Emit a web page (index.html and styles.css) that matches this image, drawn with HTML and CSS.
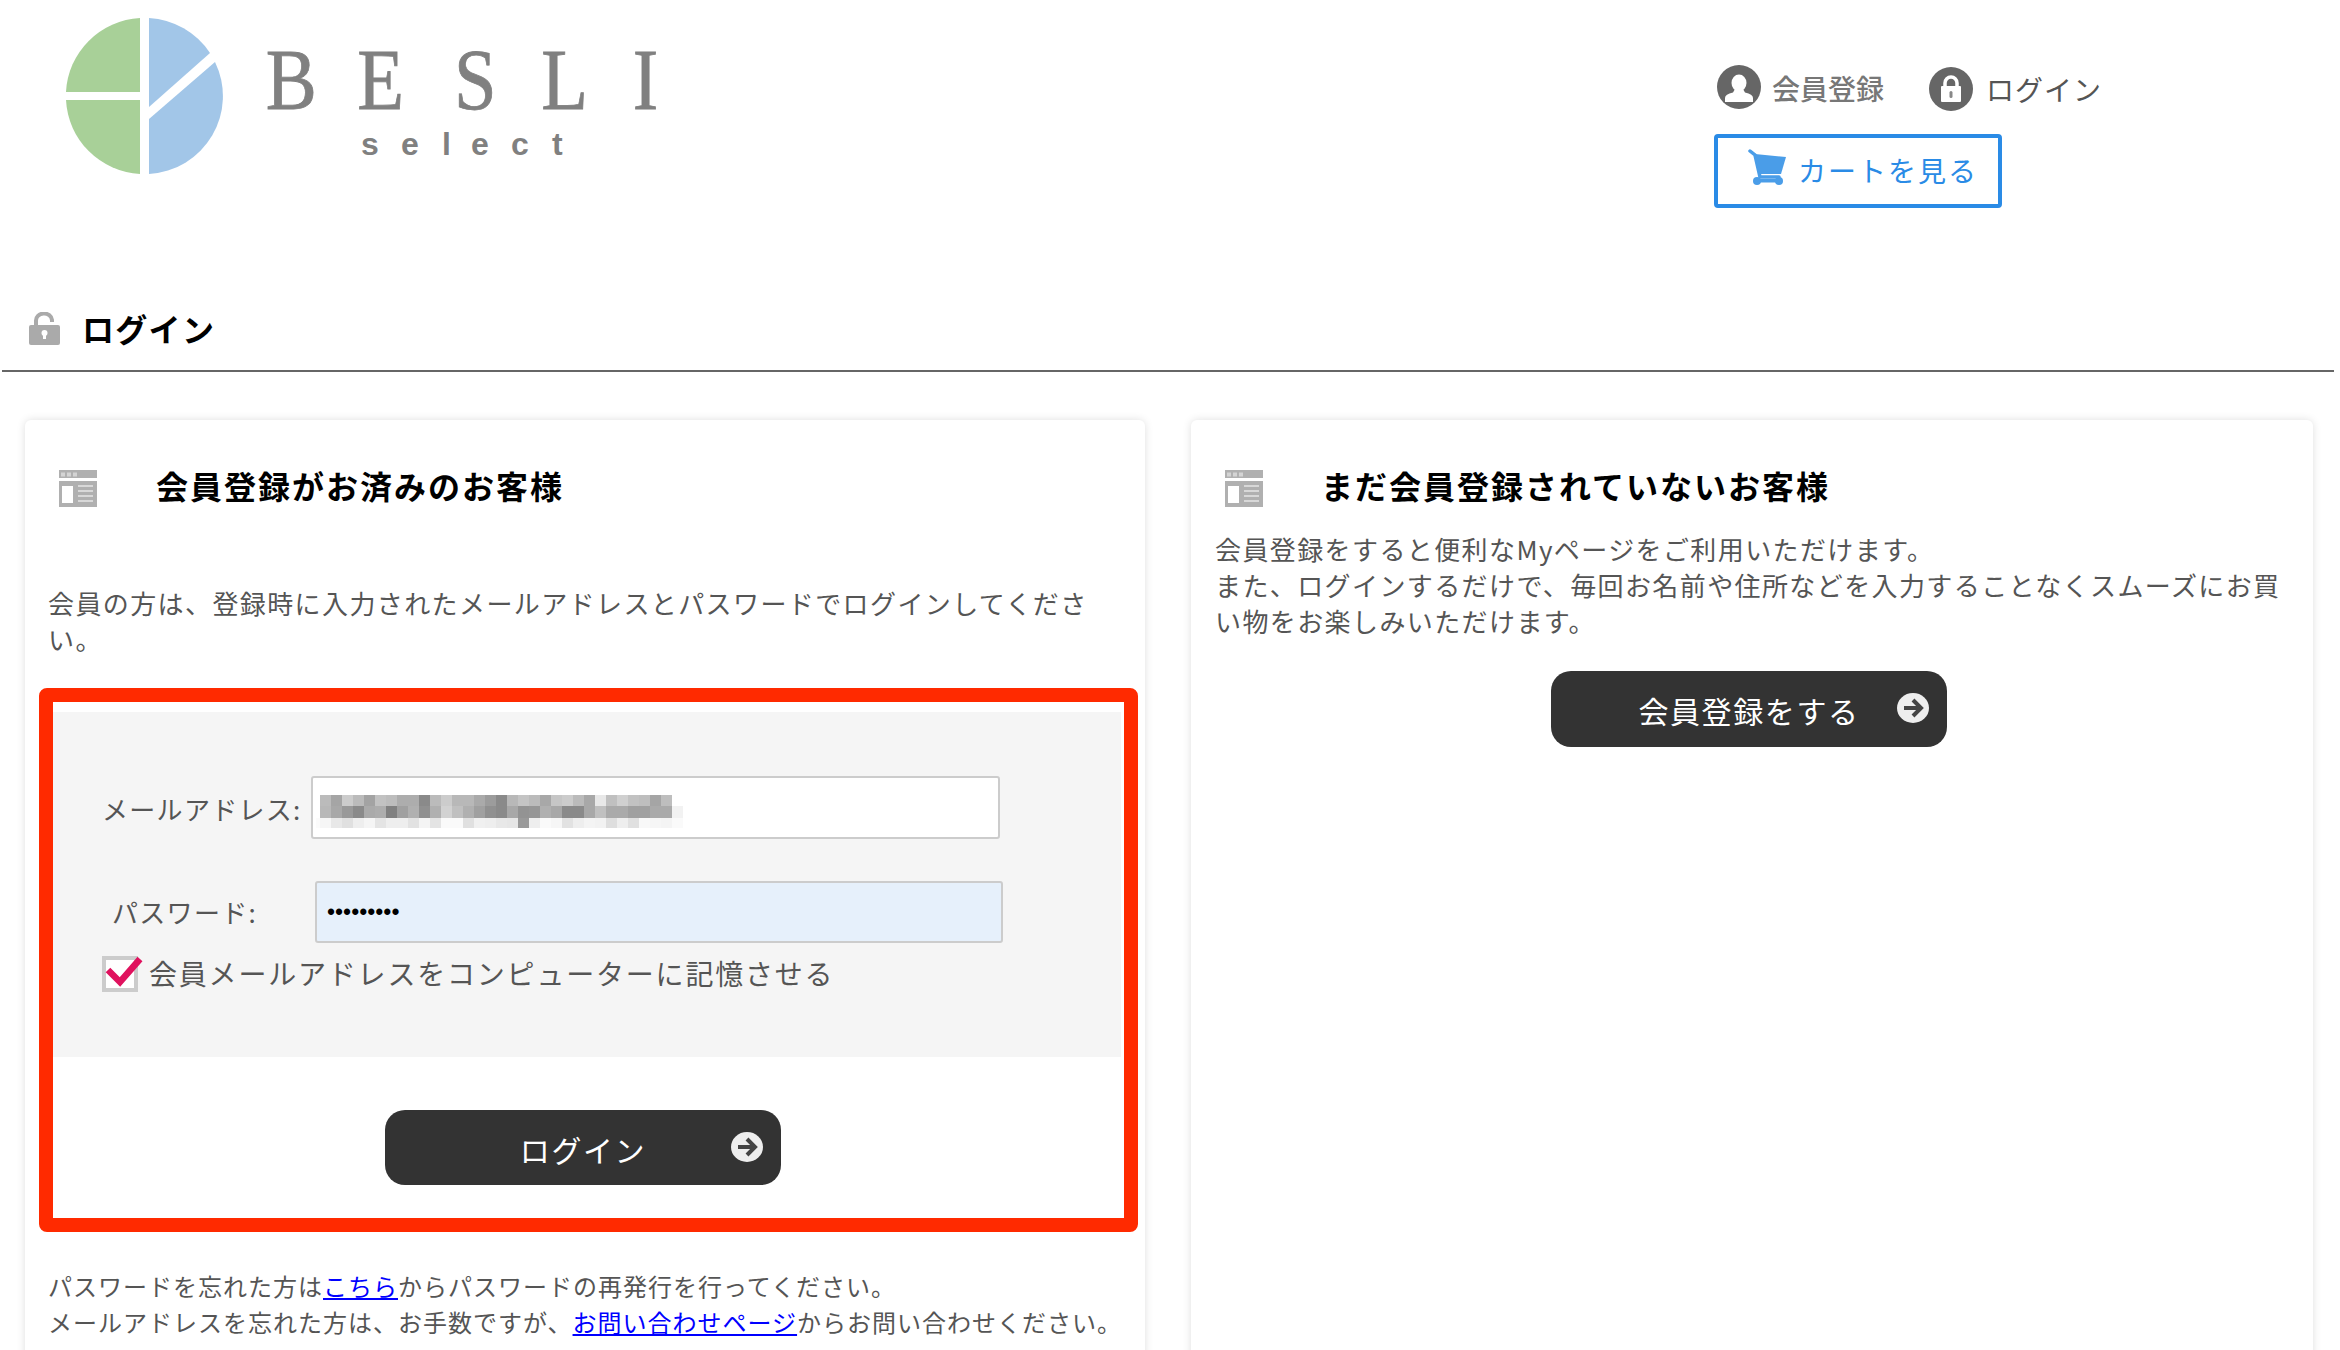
FILE: index.html
```html
<!DOCTYPE html>
<html lang="ja">
<head>
<meta charset="utf-8">
<title>ログイン</title>
<link rel="stylesheet" href="styles.css">
</head>
<body>
<header class="site-header">
  <a class="logo" href="#">
    <svg class="logo-svg" width="680" height="180" viewBox="0 0 680 180">
      <path fill="#a8d098" d="M140 18A78.5 78 0 0 0 66 92H140Z"/>
      <path fill="#a8d098" d="M66 100A78.5 78 0 0 0 140 174V100Z"/>
      <path fill="#a2c6e8" d="M149 18A78.5 78 0 0 1 210 53L149 107Z"/>
      <path fill="#a2c6e8" d="M149 119L215 62A78.5 78 0 0 1 149 174Z"/>
      <text class="logo-name" transform="scale(.88 1)" x="302 406 516 615 719" y="109">BESLI</text>
      <text class="logo-sub" x="361 401 442 471 511 552" y="155">select</text>
    </svg>
  </a>
  <nav class="head-nav">
    <div class="head-links">
      <a class="head-link head-link-reg" href="#">
        <svg class="round-icon" width="44" height="44" viewBox="0 0 44 44">
          <circle cx="22" cy="22" r="22" fill="#666"/>
          <ellipse cx="22" cy="18" rx="7.5" ry="8.5" fill="#fff"/>
          <path fill="#fff" d="M8 37V33Q8 29 16 27.5L18 24H26L28 27.5Q36 29 36 33V37Z"/>
        </svg>
        <span>会員登録</span>
      </a>
      <a class="head-link head-link-login" href="#">
        <svg class="round-icon" width="44" height="44" viewBox="0 0 44 44">
          <circle cx="22" cy="22" r="22" fill="#666"/>
          <path fill="none" stroke="#fff" stroke-width="3.5" d="M16 20V16A6 6 0 0 1 28 16V20"/>
          <rect x="12" y="19" width="20" height="16" rx="1" fill="#fff"/>
          <rect x="20.5" y="24" width="3" height="7" rx="1.5" fill="#888"/>
        </svg>
        <span>ログイン</span>
      </a>
    </div>
    <a class="cart-btn" href="#">
      <svg class="cart-icon" width="40" height="38" viewBox="0 0 40 38">
        <path fill="none" stroke="#4a9de8" stroke-width="3.5" stroke-linecap="round" d="M3 3L8 7L13 29H32"/>
        <path fill="#4a9de8" d="M8 6L39 9L34 26L12 26Z"/>
        <circle cx="10" cy="33" r="4" fill="#4a9de8"/>
        <circle cx="32" cy="33" r="4" fill="#4a9de8"/>
        <rect x="10" y="31" width="22" height="3.5" fill="#4a9de8"/>
      </svg>
      <span>カートを見る</span>
    </a>
  </nav>
</header>

<h1 class="page-title">
  <svg class="title-lock" width="31" height="33" viewBox="0 0 31 33">
    <path fill="none" stroke="#aaa" stroke-width="4" d="M7 14V9A8 7 0 0 1 23 8V10"/>
    <rect x="0" y="13" width="31" height="20" rx="2" fill="#aaa"/>
    <circle cx="15.500" cy="21" r="3" fill="#fff"/>
    <rect x="14" y="21" width="3" height="6" fill="#fff"/>
  </svg>
  <span>ログイン</span>
</h1>

<main class="cards">
  <section class="card card-left">
    <h2 class="card-title">
      <svg class="win-icon" width="38" height="37" viewBox="0 0 38 37">
        <rect width="38" height="8" fill="#b0b0b0"/>
        <rect x="2" y="2.500" width="4" height="4" fill="#d4d4d4"/>
        <rect x="8" y="2.500" width="4" height="4" fill="#d4d4d4"/>
        <rect x="14" y="2.500" width="4" height="4" fill="#d4d4d4"/>
        <rect y="11" width="38" height="26" fill="#b0b0b0"/>
        <rect x="3" y="16" width="11" height="17" fill="#fff"/>
        <rect x="19" y="15" width="15" height="2" fill="#d8d8d8"/>
        <rect x="19" y="20" width="15" height="2" fill="#d8d8d8"/>
        <rect x="19" y="25" width="15" height="2" fill="#d8d8d8"/>
        <rect x="19" y="30" width="15" height="2" fill="#d8d8d8"/>
      </svg>
      <span>会員登録がお済みのお客様</span>
    </h2>
    <p class="lead">会員の方は、登録時に入力されたメールアドレスとパスワードでログインしてください。</p>
    <form class="login-box">
      <div class="login-fields">
        <div class="field field-mail">
          <label class="field-label">メールアドレス:</label>
          <div class="input-wrap">
            <input class="text-input" type="text">
            <svg class="mosaic" width="368" height="33" viewBox="0 0 368 33" shape-rendering="crispEdges">
              <rect x="4" y="0" width="11" height="11" fill="#bbb"/><rect x="15" y="0" width="11" height="11" fill="#a5a5a5"/><rect x="26" y="0" width="11" height="11" fill="#ccc"/><rect x="37" y="0" width="11" height="11" fill="#bbb"/><rect x="48" y="0" width="11" height="11" fill="#a3a3a3"/><rect x="59" y="0" width="11" height="11" fill="#c2c2c2"/><rect x="70" y="0" width="11" height="11" fill="#bdbdbd"/><rect x="81" y="0" width="11" height="11" fill="#adadad"/><rect x="92" y="0" width="11" height="11" fill="#adadad"/><rect x="103" y="0" width="11" height="11" fill="#8a8a8a"/><rect x="114" y="0" width="11" height="11" fill="#bbb"/><rect x="125" y="0" width="11" height="11" fill="#ccc"/><rect x="136" y="0" width="11" height="11" fill="#b8b8b8"/><rect x="147" y="0" width="11" height="11" fill="#b8b8b8"/><rect x="158" y="0" width="11" height="11" fill="#aaa"/><rect x="169" y="0" width="11" height="11" fill="#9c9c9c"/><rect x="180" y="0" width="11" height="11" fill="#8a8a8a"/><rect x="191" y="0" width="11" height="11" fill="#b8b8b8"/><rect x="202" y="0" width="11" height="11" fill="#c4c4c4"/><rect x="213" y="0" width="11" height="11" fill="#bbb"/><rect x="224" y="0" width="11" height="11" fill="#a8a8a8"/><rect x="235" y="0" width="11" height="11" fill="#c6c6c6"/><rect x="246" y="0" width="11" height="11" fill="#ccc"/><rect x="257" y="0" width="11" height="11" fill="#bbb"/><rect x="268" y="0" width="11" height="11" fill="#a8a8a8"/><rect x="279" y="0" width="11" height="11" fill="#e8e8e8"/><rect x="290" y="0" width="11" height="11" fill="#c0c0c0"/><rect x="301" y="0" width="11" height="11" fill="#d0d0d0"/><rect x="312" y="0" width="11" height="11" fill="#c2c2c2"/><rect x="323" y="0" width="11" height="11" fill="#bebebe"/><rect x="334" y="0" width="11" height="11" fill="#a5a5a5"/><rect x="345" y="0" width="11" height="11" fill="#bebebe"/>
              <rect x="4" y="11" width="11" height="12" fill="#b8b8b8"/><rect x="15" y="11" width="11" height="12" fill="#a8a8a8"/><rect x="26" y="11" width="11" height="12" fill="#999"/><rect x="37" y="11" width="11" height="12" fill="#8a8a8a"/><rect x="48" y="11" width="11" height="12" fill="#aaa"/><rect x="59" y="11" width="11" height="12" fill="#adadad"/><rect x="70" y="11" width="11" height="12" fill="#808080"/><rect x="81" y="11" width="11" height="12" fill="#a0a0a0"/><rect x="92" y="11" width="11" height="12" fill="#b0b0b0"/><rect x="103" y="11" width="11" height="12" fill="#909090"/><rect x="114" y="11" width="11" height="12" fill="#b0b0b0"/><rect x="125" y="11" width="11" height="12" fill="#d2d2d2"/><rect x="136" y="11" width="11" height="12" fill="#c0c0c0"/><rect x="147" y="11" width="11" height="12" fill="#b0b0b0"/><rect x="158" y="11" width="11" height="12" fill="#a0a0a0"/><rect x="169" y="11" width="11" height="12" fill="#909090"/><rect x="180" y="11" width="11" height="12" fill="#8a8a8a"/><rect x="191" y="11" width="11" height="12" fill="#a8a8a8"/><rect x="202" y="11" width="11" height="12" fill="#939393"/><rect x="213" y="11" width="11" height="12" fill="#969696"/><rect x="224" y="11" width="11" height="12" fill="#b0b0b0"/><rect x="235" y="11" width="11" height="12" fill="#a8a8a8"/><rect x="246" y="11" width="11" height="12" fill="#8a8a8a"/><rect x="257" y="11" width="11" height="12" fill="#8a8a8a"/><rect x="268" y="11" width="11" height="12" fill="#a8a8a8"/><rect x="279" y="11" width="11" height="12" fill="#c0c0c0"/><rect x="290" y="11" width="11" height="12" fill="#aaa"/><rect x="301" y="11" width="11" height="12" fill="#aaa"/><rect x="312" y="11" width="11" height="12" fill="#a0a0a0"/><rect x="323" y="11" width="11" height="12" fill="#a0a0a0"/><rect x="334" y="11" width="11" height="12" fill="#aaa"/><rect x="345" y="11" width="11" height="12" fill="#aaa"/><rect x="356" y="11" width="11" height="12" fill="#f2f2f2"/>
              <rect x="0" y="23" width="4" height="10" fill="#fbfbfb"/><rect x="4" y="23" width="11" height="10" fill="#f6f6f6"/><rect x="15" y="23" width="11" height="10" fill="#e8e8e8"/><rect x="26" y="23" width="11" height="10" fill="#e0e0e0"/><rect x="37" y="23" width="11" height="10" fill="#eee"/><rect x="48" y="23" width="11" height="10" fill="#f5f5f5"/><rect x="59" y="23" width="11" height="10" fill="#e4e4e4"/><rect x="70" y="23" width="11" height="10" fill="#eee"/><rect x="81" y="23" width="11" height="10" fill="#eee"/><rect x="92" y="23" width="11" height="10" fill="#e2e2e2"/><rect x="103" y="23" width="11" height="10" fill="#f4f4f4"/><rect x="114" y="23" width="11" height="10" fill="#e4e4e4"/><rect x="125" y="23" width="11" height="10" fill="#fafafa"/><rect x="136" y="23" width="11" height="10" fill="#fafafa"/><rect x="147" y="23" width="11" height="10" fill="#e0e0e0"/><rect x="158" y="23" width="11" height="10" fill="#f0f0f0"/><rect x="169" y="23" width="11" height="10" fill="#eee"/><rect x="180" y="23" width="11" height="10" fill="#e8e8e8"/><rect x="191" y="23" width="11" height="10" fill="#e6e6e6"/><rect x="202" y="23" width="11" height="10" fill="#999"/><rect x="213" y="23" width="11" height="10" fill="#eee"/><rect x="224" y="23" width="11" height="10" fill="#fafafa"/><rect x="235" y="23" width="11" height="10" fill="#f6f6f6"/><rect x="246" y="23" width="11" height="10" fill="#e2e2e2"/><rect x="257" y="23" width="11" height="10" fill="#eee"/><rect x="268" y="23" width="11" height="10" fill="#f4f4f4"/><rect x="279" y="23" width="11" height="10" fill="#f2f2f2"/><rect x="290" y="23" width="11" height="10" fill="#dedede"/><rect x="301" y="23" width="11" height="10" fill="#eee"/><rect x="312" y="23" width="11" height="10" fill="#e0e0e0"/><rect x="323" y="23" width="11" height="10" fill="#f8f8f8"/><rect x="334" y="23" width="11" height="10" fill="#f6f6f6"/><rect x="345" y="23" width="11" height="10" fill="#f4f4f4"/><rect x="356" y="23" width="11" height="10" fill="#fafafa"/>
            </svg>
          </div>
        </div>
        <div class="field field-pass">
          <label class="field-label">パスワード:</label>
          <input class="text-input text-input-filled" type="password" value="password1">
        </div>
        <label class="remember">
          <span class="check-box">
            <svg class="check-mark" width="36" height="36" viewBox="0 0 36 36">
              <path fill="none" stroke="#e0125e" stroke-width="6.500" d="M6 14L18 26L38 3"/>
            </svg>
          </span>
          <span class="remember-text">会員メールアドレスをコンピューターに記憶させる</span>
        </label>
      </div>
      <a class="dark-btn dark-btn-login" href="#">
        <span>ログイン</span>
        <svg class="btn-arrow" width="32" height="30" viewBox="0 0 32 30">
          <ellipse cx="16" cy="15" rx="16" ry="15" fill="#eee"/>
          <path fill="none" stroke="#444" stroke-width="4" d="M7 15H23M16 7L24 15L16 23"/>
        </svg>
      </a>
    </form>
    <p class="note">パスワードを忘れた方は<a href="#">こちら</a>からパスワードの再発行を行ってください。<br>メールアドレスを忘れた方は、お手数ですが、<a href="#">お問い合わせページ</a>からお問い合わせください。</p>
  </section>

  <section class="card card-right">
    <h2 class="card-title">
      <svg class="win-icon" width="38" height="37" viewBox="0 0 38 37">
        <rect width="38" height="8" fill="#b0b0b0"/>
        <rect x="2" y="2.500" width="4" height="4" fill="#d4d4d4"/>
        <rect x="8" y="2.500" width="4" height="4" fill="#d4d4d4"/>
        <rect x="14" y="2.500" width="4" height="4" fill="#d4d4d4"/>
        <rect y="11" width="38" height="26" fill="#b0b0b0"/>
        <rect x="3" y="16" width="11" height="17" fill="#fff"/>
        <rect x="19" y="15" width="15" height="2" fill="#d8d8d8"/>
        <rect x="19" y="20" width="15" height="2" fill="#d8d8d8"/>
        <rect x="19" y="25" width="15" height="2" fill="#d8d8d8"/>
        <rect x="19" y="30" width="15" height="2" fill="#d8d8d8"/>
      </svg>
      <span>まだ会員登録されていないお客様</span>
    </h2>
    <p class="lead">会員登録をすると便利なMyページをご利用いただけます。<br>また、ログインするだけで、毎回お名前や住所などを入力することなくスムーズにお買い物をお楽しみいただけます。</p>
    <a class="dark-btn dark-btn-reg" href="#">
      <span>会員登録をする</span>
      <svg class="btn-arrow" width="32" height="30" viewBox="0 0 32 30">
        <ellipse cx="16" cy="15" rx="16" ry="15" fill="#eee"/>
        <path fill="none" stroke="#444" stroke-width="4" d="M7 15H23M16 7L24 15L16 23"/>
      </svg>
    </a>
  </section>
</main>
</body>
</html>
```
FILE: styles.css
```css
* { box-sizing: border-box; }
html, body {
  margin: 0;
  height: 1350px;
  overflow: hidden;
  background: #fff;
}
body {
  font-family: "Noto Sans CJK JP", "Liberation Sans", sans-serif;
  color: #555;
  font-size: 26px;
  line-height: 36px;
}
a { text-decoration: none; color: inherit; }

/* Header */
.site-header {
  display: flex;
  justify-content: space-between;
  height: 310px;
}
.logo-svg { display: block; }
.logo-name {
  font-family: "Liberation Serif", serif;
  font-size: 87px;
  fill: #808080;
  stroke: #808080;
  stroke-width: .8px;
}
.logo-sub {
  font-family: "Liberation Sans", sans-serif;
  font-weight: 700;
  font-size: 32px;
  fill: #808080;
}
.head-nav {
  width: 288px;
  margin: 65px 338px 0 0;
  flex: none;
}
.head-links {
  display: flex;
  height: 69px;
  white-space: nowrap;
}
.head-link {
  display: flex;
  align-items: flex-start;
  flex: none;
}
.round-icon { flex: none; }
.head-link-reg {
  margin-left: 3px;
  color: #777;
  font-weight: 500;
  font-size: 28px;
  width: 212px;
}
.head-link-reg span { margin: 5px 0 0 11px; }
.head-link-login {
  color: #555;
  font-size: 28px;
  letter-spacing: 1px;
}
.head-link-login svg { margin-top: 2px; }
.head-link-login span { margin: 6px 0 0 13px; }
.cart-btn {
  display: flex;
  align-items: center;
  width: 288px;
  height: 74px;
  border: 4px solid #2a8be6;
  border-radius: 4px;
  padding-left: 29px;
  color: #2a8be6;
  font-size: 28px;
  letter-spacing: 2px;
}
.cart-icon { flex: none; margin: -8px 0 0 0; }
.cart-btn span { margin: -2px 0 0 11px; }

/* Page title */
.page-title {
  display: flex;
  align-items: center;
  gap: 22px;
  height: 62px;
  margin: 0 6px 48px 2px;
  padding: 0 0 24px 27px;
  border-bottom: 2px solid #666;
  color: #000;
  font-size: 32px;
  line-height: 40px;
  font-weight: 700;
  letter-spacing: 1.300px;
}

/* Cards */
.cards {
  display: flex;
  gap: 46px;
  padding-left: 25px;
}
.card {
  width: 1120px;
  min-height: 1100px;
  flex: none;
  padding: 49px 23px 0;
  background: #fff;
  border-radius: 6px;
  box-shadow: 0 0 8px rgba(0, 0, 0, .13);
}
.card-right { width: 1122px; padding-left: 24px; }
.card-title {
  display: flex;
  align-items: center;
  gap: 59px;
  height: 38px;
  margin: 0 0 0 11px;
  color: #000;
  font-size: 32px;
  font-weight: 700;
  letter-spacing: 2px;
  line-height: 38px;
}
.card-title span { margin-bottom: 6px; }
.card-right .card-title { margin-left: 10px; gap: 58px; }
.win-icon { flex: none; }
.lead {
  margin: 0;
  letter-spacing: 1.400px;
}
.card-left .lead { margin-top: 78px; max-width: 1060px; }
.card-right .lead { margin-top: 24px; }

/* Login box */
.login-box {
  width: 1099px;
  margin: 31px 0 0 -9px;
  padding: 10px 3px 33px 0;
  border: 14px solid #ff2a00;
  border-radius: 8px;
}
.login-fields {
  height: 345px;
  padding-top: 64px;
  background: #f5f5f5;
}
.field {
  display: flex;
  align-items: center;
}
.field-mail { height: 63px; margin-left: 49px; }
.field-pass { height: 62px; margin: 42px 0 0 59px; }
.field-label { flex: none; letter-spacing: 1.300px; }
.field-mail .field-label { width: 209px; padding-top: 2px; }
.field-pass .field-label { width: 203px; }
.input-wrap { position: relative; }
.text-input {
  display: block;
  height: 63px;
  width: 689px;
  padding: 0 10px;
  border: 2px solid #ccc;
  border-radius: 3px;
  background: #fff;
  font-family: "Liberation Sans", sans-serif;
  font-size: 23px;
  color: #000;
  outline: none;
}
.text-input-filled {
  height: 62px;
  width: 688px;
  background: #e6f0fb;
}
.mosaic {
  position: absolute;
  left: 5px;
  top: 19px;
  filter: blur(.4px);
}
.remember {
  display: flex;
  align-items: center;
  gap: 11px;
  height: 36px;
  margin: 13px 0 0 49px;
  font-size: 28px;
  letter-spacing: 1.800px;
}
.remember-text { margin-top: -2px; }
.check-box {
  position: relative;
  flex: none;
  width: 36px;
  height: 36px;
  border: 4px solid #ccc;
  background: #fff;
}
.check-mark {
  position: absolute;
  left: -4px;
  top: -4px;
  overflow: visible;
}

/* Buttons */
.dark-btn {
  position: relative;
  display: flex;
  align-items: center;
  justify-content: center;
  width: 396px;
  background: #333;
  border-radius: 20px;
  color: #fff;
  font-size: 30px;
  letter-spacing: 1.600px;
  padding-top: 2px;
}
.dark-btn-login { height: 75px; margin: 53px 0 0 332px; }
.dark-btn-reg { height: 76px; margin: 32px 0 0 336px; padding-top: 1px; }
.btn-arrow {
  position: absolute;
  right: 18px;
  top: 22px;
  filter: blur(.4px);
}

/* Note */
.note {
  margin: 36px -6px 0 0;
  font-size: 24px;
  letter-spacing: 1px;
}
.note a {
  color: #00f;
  text-decoration: underline;
}
```
